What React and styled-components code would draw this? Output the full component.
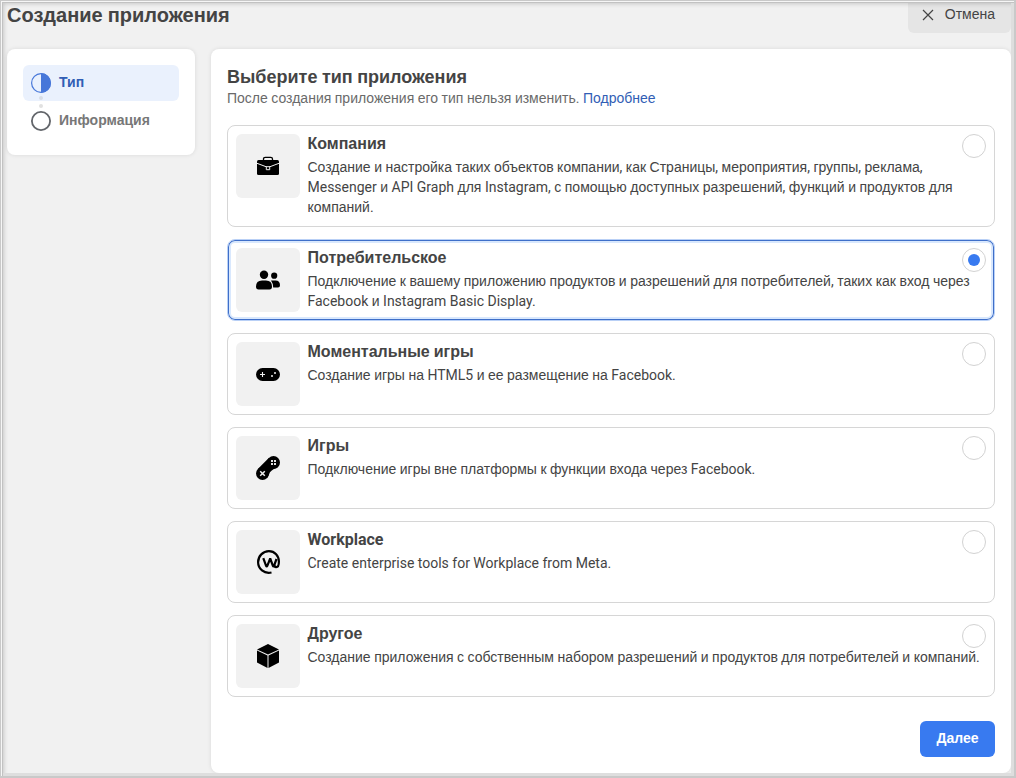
import React, { useState } from 'react';
import styled, { createGlobalStyle, css } from 'styled-components';

const Global = createGlobalStyle`
  * { box-sizing: border-box; }
  body { margin: 0; background: #f1f1f1; font-family: Roboto, "Liberation Sans", sans-serif; color: #444; }
  h1, h2, h3, p { margin: 0; }
  button { font-family: inherit; border: 0; cursor: pointer; }
`;

const Window = styled.div`
  position: relative;
  width: 1016px;
  height: 778px;
  padding: 0 5px 5px 7px;
  display: flex;
  flex-direction: column;
  gap: 16px;
  background: #f1f1f1;
  overflow: hidden;
`;

const WindowFrame = styled.div`
  position: absolute;
  inset: 0;
  pointer-events: none;
  border: solid #c9c9c9;
  border-width: 1px 2px 2px 1px;
  box-shadow: inset 1px 1px 0 #f6f6f6, inset 2px 2px 0 #c2c2c2, inset -3px -3px 0 #dedede, inset 3px 3px 4px rgba(0, 0, 0, 0.17);
`;

const Header = styled.header`
  display: flex;
  justify-content: space-between;
  height: 33px;
`;

const PageTitle = styled.h1`
  font-size: 20px;
  line-height: 30px;
  white-space: nowrap;
`;

const CancelButton = styled.button`
  width: 103px;
  height: 33px;
  padding: 0 16px 4px 13px;
  display: flex;
  align-items: center;
  justify-content: space-between;
  border-radius: 0 0 6px 6px;
  background: #e5e5e5;
  color: #444;
  font-size: 14px;
`;

const CancelLabel = styled.span`
  padding-bottom: 2px;
`;

const Body = styled.div`
  display: grid;
  grid-template-columns: 188px 800px;
  gap: 16px;
  align-items: start;
`;

const Card = styled.section`
  background: #fff;
  border-radius: 8px;
  padding: 16px;
  box-shadow: 0 0 4px rgba(0, 0, 0, 0.1);
`;

const Steps = styled(Card)`
  height: 106px;
`;

const Step = styled.div`
  display: flex;
  align-items: center;
  gap: 8px;
  height: ${(p) => (p.$active ? 36 : 40)}px;
  padding-left: 8px;
  border-radius: 6px;
  background: ${(p) => (p.$active ? '#eaf1fd' : 'transparent')};
  color: ${(p) => (p.$active ? '#315eb5' : '#777')};
  font-size: 14px;
  font-weight: 700;
  svg { flex: none; overflow: visible; }
`;

const StepLabel = styled.span`
  line-height: 18px;
  padding-bottom: 2px;
`;

const Main = styled(Card)`
  height: 724px;
  display: flex;
  flex-direction: column;
`;

const Heading = styled.h2`
  font-size: 18px;
  line-height: 24px;
`;

const Note = styled.p`
  font-size: 14px;
  line-height: 18px;
  color: #6a6a6a;
  white-space: nowrap;
`;

const Link = styled.a`
  color: #315eb5;
`;

const Options = styled.div`
  display: flex;
  flex-direction: column;
  gap: 12px;
  margin-top: 18px;
`;

const selectedStyle = css`
  border-color: #b9d0f6;
  box-shadow: inset 0 0 0 1px #3f6fc9, inset 0 0 0 3px #d9e8fd;
`;

const OptionRow = styled.div`
  position: relative;
  display: flex;
  gap: 7.5px;
  height: ${(p) => (p.$tall ? 102 : 82)}px;
  padding: 8px;
  border: 1px solid #d6d6d6;
  border-radius: 8px;
  ${(p) => p.$selected && selectedStyle}
`;

const IconTile = styled.div`
  width: 64px;
  height: 64px;
  flex: none;
  display: grid;
  place-items: center;
  border-radius: 6px;
  background: #f1f1f1;
`;

const OptionText = styled.div`
  white-space: nowrap;
`;

const OptionTitle = styled.h3`
  font-size: 16px;
  line-height: 20px;
`;

const Description = styled.p`
  margin-top: 3px;
  font-size: 14px;
  line-height: 20px;
`;

const Line = styled.span`
  display: block;
`;

const Cyrillic = styled.span`
  font-family: "Liberation Sans", Arial, sans-serif;
`;

const Radio = styled.span`
  position: absolute;
  top: 8px;
  right: 8px;
  width: 24px;
  height: 24px;
  display: grid;
  place-items: center;
  border: 1px solid #d2d2d2;
  border-radius: 50%;
  background: #fff;
  &::after {
    content: '';
    width: 12px;
    height: 12px;
    border-radius: 50%;
    background: ${(p) => (p.$checked ? '#387af0' : 'transparent')};
  }
`;

const NextButton = styled.button`
  align-self: flex-end;
  width: 75px;
  height: 36px;
  margin-top: 24px;
  padding: 0 0 2px;
  border-radius: 6px;
  background: #387af0;
  color: #fff;
  font-size: 14px;
  font-weight: 700;
`;

// Sets Cyrillic words in the sans-serif face and leaves Latin words, spaces and punctuation in Roboto.
const Mixed = ({ children }) =>
  children.split(/([а-яё]+)/i).map((part, i) => (i % 2 ? <Cyrillic key={i}>{part}</Cyrillic> : part));

const CloseIcon = () => (
  <svg width="14" height="14" viewBox="0 0 14 14" stroke="#444" strokeWidth="1.2" fill="none">
    <path d="M2 2l10 10M12 2L2 12" />
  </svg>
);

const BriefcaseIcon = () => (
  <svg width="24" height="24" viewBox="0 0 24 24">
    <path d="M7.500 6V5q0-1.600 1.800-1.600h5.400q1.800 0 1.800 1.600v1" fill="none" stroke="#000" strokeWidth="1.300" />
    <path d="M2.500 6h19Q23 6 23 7.500v12Q23 21 21.500 21h-19Q1 21 1 19.500v-12Q1 6 2.500 6z" />
    <path d="M1 9.300l9 3.400h4l9-3.400M10.300 12.500v3.200h3.400v-3.200" fill="none" stroke="#f1f1f1" strokeWidth="1" />
  </svg>
);

const PeopleIcon = () => (
  <svg width="24" height="24" viewBox="0 0 24 24">
    <circle cx="8" cy="6.700" r="4.200" />
    <circle cx="18.200" cy="7.700" r="3.100" />
    <path d="M0 18.500Q0 12.500 6 12.500h4q6 0 6 6Q16 21.500 13.500 21.500h-11Q0 21.500 0 18.500z" />
    <path d="M15 12.500h4.500q4.500 0 4.500 4.700 0 2.300-2 2.300h-4.800q0-4-2.200-7z" />
  </svg>
);

const GamepadIcon = () => (
  <svg width="24" height="24" viewBox="0 0 24 24">
    <rect y="6" width="24" height="13" rx="6.500" />
    <path d="M6.500 10v5M4 12.500h5" stroke="#f1f1f1" strokeWidth="1.100" />
    <circle cx="19" cy="11" r="1" fill="#f1f1f1" />
    <circle cx="16" cy="14" r="1" fill="#f1f1f1" />
  </svg>
);

const ControllerIcon = () => (
  <svg width="24" height="24" viewBox="0 0 24 24">
    <circle cx="17.500" cy="6.500" r="6.500" />
    <circle cx="6.500" cy="17.500" r="6.500" />
    <path d="M13 1.800L22.200 11Q14 14 13 18.500L11 22.200 1.800 13z" />
    <path d="M4.200 15.200l4.600 4.600M8.800 15.200l-4.600 4.600" stroke="#f1f1f1" strokeWidth="1.500" />
    <path d="M15 4h2v2h-2zM18 4h2v2h-2zM15 7h2v2h-2zM18 7h2v2h-2z" fill="#e2e2e2" />
  </svg>
);

const WorkplaceIcon = () => (
  <svg width="24" height="24" viewBox="0 0 24 24" fill="none" stroke="#000" strokeWidth="2.200">
    <path d="M15.500 22.500C8 24.200 2.100 18.700 2.100 12.200 2.100 6 7 1.200 12.900 1.200S22.900 6 22.900 11.500c0 3.700-1 5.700-2.700 5.700-1.100 0-1.700-.9-2.200-2.200" />
    <path d="M7.300 8.200L10.100 15.800Q10.700 17.200 11.300 15.800L14.200 8.500 16.900 15.800Q17.400 17.200 18 15.800L20.500 9" strokeLinejoin="bevel" />
  </svg>
);

const CubeIcon = () => (
  <svg width="24" height="24" viewBox="0 0 24 24">
    <path d="M12 0L23 5.500 12 10.500 1 5.500zM1 6.600L11.500 11.500v12.500L1 18.500zM23 6.600L12.500 11.500v12.500L23 18.500z" />
  </svg>
);

const HalfCircleIcon = () => (
  <svg width="20" height="20" viewBox="0 0 20 20">
    <circle cx="10" cy="10" r="9.400" fill="none" stroke="#4777d9" strokeWidth="1.200" />
    <path d="M10 0a10 10 0 0 1 0 20z" fill="#4777d9" />
    <circle cx="10" cy="25" r="2" fill="#d7dde7" />
    <circle cx="10" cy="33" r="2" fill="#e1e1e1" />
  </svg>
);

const CircleIcon = () => (
  <svg width="20" height="20" viewBox="0 0 20 20">
    <circle cx="10" cy="10" r="9.100" fill="none" stroke="#62656a" strokeWidth="1.800" />
  </svg>
);

const OPTIONS = [
  {
    title: 'Компания',
    Icon: BriefcaseIcon,
    tall: true,
    lines: [
      'Создание и настройка таких объектов компании, как Страницы, мероприятия, группы, реклама,',
      'Messenger и API Graph для Instagram, с помощью доступных разрешений, функций и продуктов для',
      'компаний.',
    ],
  },
  {
    title: 'Потребительское',
    Icon: PeopleIcon,
    lines: [
      'Подключение к вашему приложению продуктов и разрешений для потребителей, таких как вход через',
      'Facebook и Instagram Basic Display.',
    ],
  },
  { title: 'Моментальные игры', Icon: GamepadIcon, lines: ['Создание игры на HTML5 и ее размещение на Facebook.'] },
  { title: 'Игры', Icon: ControllerIcon, lines: ['Подключение игры вне платформы к функции входа через Facebook.'] },
  { title: 'Workplace', Icon: WorkplaceIcon, lines: ['Create enterprise tools for Workplace from Meta.'] },
  { title: 'Другое', Icon: CubeIcon, lines: ['Создание приложения с собственным набором разрешений и продуктов для потребителей и компаний.'] },
];

export default function App() {
  const [selected, setSelected] = useState(1);
  return (
    <Window>
      <Global />
      <Header>
        <PageTitle><Mixed>Создание приложения</Mixed></PageTitle>
        <CancelButton><CloseIcon /><CancelLabel><Mixed>Отмена</Mixed></CancelLabel></CancelButton>
      </Header>
      <Body>
        <Steps>
          <Step $active><HalfCircleIcon /><StepLabel><Mixed>Тип</Mixed></StepLabel></Step>
          <Step><CircleIcon /><StepLabel><Mixed>Информация</Mixed></StepLabel></Step>
        </Steps>
        <Main>
          <Heading><Mixed>Выберите тип приложения</Mixed></Heading>
          <Note><Mixed>{'После создания приложения его тип нельзя изменить. '}</Mixed><Link><Mixed>Подробнее</Mixed></Link></Note>
          <Options>
            {OPTIONS.map(({ title, Icon, lines, tall }, i) => (
              <OptionRow key={title} $tall={tall} $selected={i === selected} onClick={() => setSelected(i)}>
                <IconTile><Icon /></IconTile>
                <OptionText>
                  <OptionTitle><Mixed>{title}</Mixed></OptionTitle>
                  <Description>
                    {lines.map((line) => <Line key={line}><Mixed>{line}</Mixed></Line>)}
                  </Description>
                </OptionText>
                <Radio $checked={i === selected} />
              </OptionRow>
            ))}
          </Options>
          <NextButton><Mixed>Далее</Mixed></NextButton>
        </Main>
      </Body>
      <WindowFrame />
    </Window>
  );
}
